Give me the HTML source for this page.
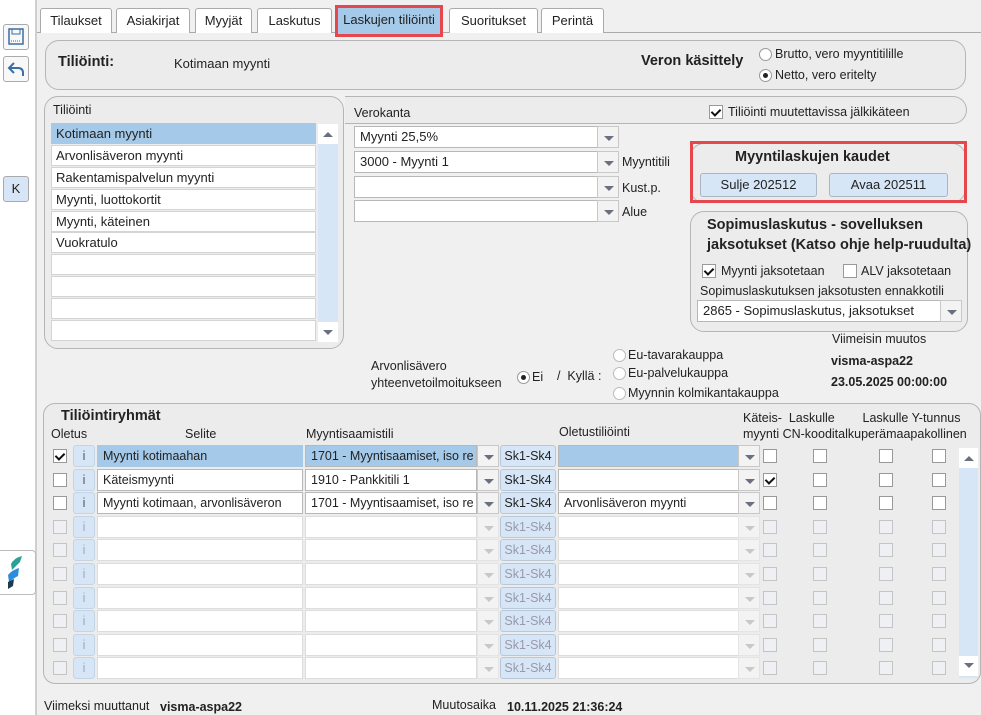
<!DOCTYPE html>
<html><head><meta charset="utf-8"><style>
*{box-sizing:border-box;margin:0;padding:0}
body{width:981px;height:715px;background:#f0f0f0;font-family:"Liberation Sans",Arial,sans-serif;font-size:12.5px;color:#222;position:relative;overflow:hidden}
.a{position:absolute}
.lbar{left:0;top:0;width:37px;height:715px;background:#fff;border-right:2px solid #cfcfcf}
.tbtn{width:26px;height:26px;border:1px solid #aaa;border-radius:3px;background:#f8f8f8}
.tab{top:8px;height:25px;border:1px solid #aaa;border-bottom:none;background:#fff;border-radius:3px 3px 0 0;text-align:center;line-height:23px;font-size:13px}
.panel{border:1px solid #b5b5b5;border-radius:14px;background:#ececec}
.box{background:#fff;border:1px solid #b8b8b8;height:22px;line-height:20px;padding-left:5px;white-space:nowrap;overflow:hidden}
.dd{background:#f3f3f3;border:1px solid #c8c8c8;width:22px;height:22px}
.dd:after{content:"";position:absolute;left:6px;top:9px;border-left:5px solid transparent;border-right:5px solid transparent;border-top:5px solid #6b7080}
.dd.dis:after{border-top-color:#c8c8c8}
.cb{width:14px;height:14px;border:1px solid #999;background:#fff}
.cb.dis{border-color:#c4c4c4;background:#eef0f4}
.chk:after{content:"";position:absolute;left:3px;top:1px;width:4px;height:7px;border:solid #111;border-width:0 2px 2px 0;transform:rotate(45deg)}
.ib{width:22px;height:22px;background:#d6e6f6;border:1px solid #c4d4e4;border-radius:3px;text-align:center;line-height:20px;color:#556}
.ib.dis{color:#9ab}
.sk{width:56px;height:22px;background:#d6e6f6;border:1px solid #b8c8d8;border-radius:3px;text-align:center;line-height:20px}
.sk.dis{color:#99a}
.li{left:51px;width:265px;height:21px;background:#fff;border:1px solid #d4d4d4;padding-left:4px;line-height:19px;font-size:13px}
.rad{width:13px;height:13px;border:1px solid #999;border-radius:50%;background:#fff}
.btn{height:24px;background:#d6e6f6;border:1px solid #a9b6c4;border-radius:3px;text-align:center;line-height:22px;font-size:13px}
b{font-weight:bold}
</style></head><body>
<div class="a lbar"></div>
<div class="a tbtn" style="left:3px;top:24px"><svg width="24" height="24"><rect x="5" y="4" width="14" height="15" fill="none" stroke="#3a6ea5" stroke-width="1.5"/><rect x="8" y="4" width="8" height="5" fill="none" stroke="#3a6ea5"/><line x1="7" y1="16" x2="17" y2="16" stroke="#3a6ea5" stroke-dasharray="1,1"/></svg></div>
<div class="a tbtn" style="left:3px;top:56px"><svg width="24" height="24"><path d="M10 6 L5 11 L10 16 M5 11 H14 Q19 11 19 16 V19" fill="none" stroke="#3a6ea5" stroke-width="2"/></svg></div>
<div class="a tbtn" style="left:3px;top:176px;text-align:center;line-height:24px;font-size:13px;background:#d6e6f6">K</div>
<div class="a" style="left:0;top:550px;width:36px;height:45px;border:1px solid #bbb;border-left:none;border-radius:0 4px 4px 0;background:#fff"><svg width="36" height="45"><path d="M11 13 Q14 7 22 5 L20 11 Q17 14 12 19 Z" fill="#2aa198"/><path d="M8 24 Q12 19 19 17 L18 25 Q14 27 9 31 Z" fill="#2b8de0"/><path d="M8 31 L14 28 L13 35 L8 38 Z" fill="#1d3b4a"/></svg></div>

<div class="a" style="left:37px;top:32px;width:944px;height:1px;background:#aaa"></div>
<div class="a tab" style="left:40px;width:72px">Tilaukset</div>
<div class="a tab" style="left:116px;width:74px">Asiakirjat</div>
<div class="a tab" style="left:195px;width:57px">Myyjät</div>
<div class="a tab" style="left:257px;width:75px">Laskutus</div>
<div class="a tab" style="left:335px;top:5px;width:108px;height:32px;background:#a5c9e9;border:3px solid #e5474d;border-radius:0;line-height:24px">Laskujen tiliöinti</div>
<div class="a tab" style="left:449px;width:89px">Suoritukset</div>
<div class="a tab" style="left:541px;width:63px">Perintä</div>

<div class="a panel" style="left:45px;top:40px;width:921px;height:50px"></div>
<div class="a" style="left:58px;top:54px;font-size:14.5px"><b>Tiliöinti:</b></div>
<div class="a" style="left:174px;top:56px;font-size:13px">Kotimaan myynti</div>
<div class="a" style="left:641px;top:53px;font-size:14.5px"><b>Veron käsittely</b></div>
<div class="a rad" style="left:759px;top:48px"></div><div class="a" style="left:775px;top:47px">Brutto, vero myyntitilille</div>
<div class="a rad" style="left:759px;top:69px"><div class="a" style="left:3px;top:3px;width:5px;height:5px;border-radius:50%;background:#222"></div></div><div class="a" style="left:775px;top:68px">Netto, vero eritelty</div>

<div class="a panel" style="left:44px;top:96px;width:300px;height:253px"></div>
<div class="a" style="left:53px;top:103px">Tiliöinti</div>
<div class="a li" style="top:123px;background:#a5c9e9;border-color:#a5c9e9">Kotimaan myynti</div>
<div class="a li" style="top:145px">Arvonlisäveron myynti</div>
<div class="a li" style="top:167px">Rakentamispalvelun myynti</div>
<div class="a li" style="top:189px">Myynti, luottokortit</div>
<div class="a li" style="top:211px">Myynti, käteinen</div>
<div class="a li" style="top:232px">Vuokratulo</div>
<div class="a li" style="top:254px"></div><div class="a li" style="top:276px"></div><div class="a li" style="top:298px"></div><div class="a li" style="top:320px"></div>
<div class="a" style="left:318px;top:124px;width:20px;height:218px;background:#d6e6f6"></div>
<div class="a" style="left:318px;top:124px;width:20px;height:20px;background:#fff"><div class="a" style="left:5px;top:8px;border-left:5px solid transparent;border-right:5px solid transparent;border-bottom:5px solid #6b7080"></div></div>
<div class="a" style="left:318px;top:322px;width:20px;height:20px;background:#fff"><div class="a" style="left:5px;top:8px;border-left:5px solid transparent;border-right:5px solid transparent;border-top:5px solid #6b7080"></div></div>

<div class="a" style="left:345px;top:96px;width:622px;height:28px;border:1px solid #b5b5b5;border-left:none;border-radius:0 14px 14px 0;background:#ececec"></div>
<div class="a" style="left:354px;top:106px">Verokanta</div>
<div class="a cb chk" style="left:709px;top:105px"></div><div class="a" style="left:728px;top:105px">Tiliöinti muutettavissa jälkikäteen</div>
<div class="a box" style="left:354px;top:126px;width:244px;font-size:13px">Myynti 25,5%</div><div class="a dd" style="left:597px;top:126px"></div>
<div class="a box" style="left:354px;top:151px;width:244px;font-size:13px">3000 - Myynti 1</div><div class="a dd" style="left:597px;top:151px"></div><div class="a" style="left:622px;top:155px">Myyntitili</div>
<div class="a box" style="left:354px;top:176px;width:244px"></div><div class="a dd" style="left:597px;top:176px"></div><div class="a" style="left:622px;top:181px">Kust.p.</div>
<div class="a box" style="left:354px;top:200px;width:244px"></div><div class="a dd" style="left:597px;top:200px"></div><div class="a" style="left:622px;top:205px">Alue</div>

<div class="a panel" style="left:690px;top:143px;width:276px;height:60px"></div>
<div class="a" style="left:690px;top:141px;width:277px;height:62px;border:3px solid #e5474d"></div>
<div class="a" style="left:735px;top:149px;font-size:14.5px"><b>Myyntilaskujen kaudet</b></div>
<div class="a btn" style="left:700px;top:173px;width:117px">Sulje 202512</div>
<div class="a btn" style="left:829px;top:173px;width:119px">Avaa 202511</div>

<div class="a panel" style="left:690px;top:211px;width:278px;height:121px"></div>
<div class="a" style="left:707px;top:215px;font-size:14.5px;line-height:20px;white-space:nowrap"><b>Sopimuslaskutus - sovelluksen<br>jaksotukset (Katso ohje help-ruudulta)</b></div>
<div class="a cb chk" style="left:702px;top:264px"></div><div class="a" style="left:721px;top:264px">Myynti jaksotetaan</div>
<div class="a cb" style="left:843px;top:264px"></div><div class="a" style="left:861px;top:264px">ALV jaksotetaan</div>
<div class="a" style="left:700px;top:284px">Sopimuslaskutuksen jaksotusten ennakkotili</div>
<div class="a box" style="left:697px;top:300px;width:244px;font-size:13px">2865 - Sopimuslaskutus, jaksotukset</div><div class="a dd" style="left:940px;top:300px"></div>
<div class="a" style="left:832px;top:332px">Viimeisin muutos</div>
<div class="a" style="left:831px;top:354px"><b>visma-aspa22</b></div>
<div class="a" style="left:831px;top:375px"><b>23.05.2025 00:00:00</b></div>

<div class="a" style="left:371px;top:358px;line-height:17px">Arvonlisävero<br>yhteenvetoilmoitukseen</div>
<div class="a rad" style="left:517px;top:371px"><div class="a" style="left:3px;top:3px;width:5px;height:5px;border-radius:50%;background:#222"></div></div><div class="a" style="left:532px;top:370px">Ei</div>
<div class="a" style="left:557px;top:369px">/&nbsp; Kyllä :</div>
<div class="a rad" style="left:613px;top:349px;border-color:#bbb"></div><div class="a" style="left:628px;top:348px">Eu-tavarakauppa</div>
<div class="a rad" style="left:613px;top:367px;border-color:#bbb"></div><div class="a" style="left:628px;top:366px">Eu-palvelukauppa</div>
<div class="a rad" style="left:613px;top:387px;border-color:#bbb"></div><div class="a" style="left:628px;top:386px">Myynnin kolmikantakauppa</div>

<div class="a panel" style="left:43px;top:403px;width:938px;height:281px;border-radius:12px"></div>
<div class="a" style="left:61px;top:408px;font-size:14.5px"><b>Tiliöintiryhmät</b></div>
<div class="a" style="left:51px;top:427px">Oletus</div>
<div class="a" style="left:185px;top:427px">Selite</div>
<div class="a" style="left:306px;top:427px">Myyntisaamistili</div>
<div class="a" style="left:559px;top:425px">Oletustiliöinti</div>
<div class="a" style="left:743px;top:410px;line-height:16px;white-space:nowrap">Käteis-&nbsp; Laskulle&nbsp;&nbsp;&nbsp;&nbsp;&nbsp;&nbsp;&nbsp; Laskulle Y-tunnus<br>myynti CN-kooditalkuperämaapakollinen</div>

<div class="a cb chk" style="left:53px;top:449px"></div><div class="a ib" style="left:73px;top:445px">i</div><div class="a box" style="left:97px;top:445px;width:206px;background:#a5c9e9;border-color:#a5c9e9">Myynti kotimaahan</div><div class="a box" style="left:305px;top:445px;width:172px;background:#a5c9e9">1701 - Myyntisaamiset, iso re</div><div class="a dd" style="left:477px;top:445px"></div><div class="a sk" style="left:500px;top:445px">Sk1-Sk4</div><div class="a box" style="left:558px;top:445px;width:181px;background:#a5c9e9"></div><div class="a dd" style="left:738px;top:445px"></div>
<div class="a cb" style="left:53px;top:473px"></div><div class="a ib" style="left:73px;top:469px">i</div><div class="a box" style="left:97px;top:469px;width:206px">Käteismyynti</div><div class="a box" style="left:305px;top:469px;width:172px">1910 - Pankkitili 1</div><div class="a dd" style="left:477px;top:469px"></div><div class="a sk" style="left:500px;top:469px">Sk1-Sk4</div><div class="a box" style="left:558px;top:469px;width:181px"></div><div class="a dd" style="left:738px;top:469px"></div>
<div class="a cb" style="left:53px;top:496px"></div><div class="a ib" style="left:73px;top:492px">i</div><div class="a box" style="left:97px;top:492px;width:206px">Myynti kotimaan, arvonlisäveron</div><div class="a box" style="left:305px;top:492px;width:172px">1701 - Myyntisaamiset, iso re</div><div class="a dd" style="left:477px;top:492px"></div><div class="a sk" style="left:500px;top:492px">Sk1-Sk4</div><div class="a box" style="left:558px;top:492px;width:181px">Arvonlisäveron myynti</div><div class="a dd" style="left:738px;top:492px"></div>

<div class="a cb dis" style="left:53px;top:520px"></div><div class="a ib dis" style="left:73px;top:516px">i</div><div class="a box" style="left:97px;top:516px;width:206px;border-color:#ddd"></div><div class="a box" style="left:305px;top:516px;width:172px;border-color:#ddd"></div><div class="a dd dis" style="left:477px;top:516px;border-color:#e4e4e4"></div><div class="a sk dis" style="left:500px;top:516px">Sk1-Sk4</div><div class="a box" style="left:558px;top:516px;width:181px;border-color:#ddd"></div><div class="a dd dis" style="left:738px;top:516px;border-color:#e4e4e4"></div>
<div class="a cb dis" style="left:53px;top:543px"></div><div class="a ib dis" style="left:73px;top:539px">i</div><div class="a box" style="left:97px;top:539px;width:206px;border-color:#ddd"></div><div class="a box" style="left:305px;top:539px;width:172px;border-color:#ddd"></div><div class="a dd dis" style="left:477px;top:539px;border-color:#e4e4e4"></div><div class="a sk dis" style="left:500px;top:539px">Sk1-Sk4</div><div class="a box" style="left:558px;top:539px;width:181px;border-color:#ddd"></div><div class="a dd dis" style="left:738px;top:539px;border-color:#e4e4e4"></div>
<div class="a cb dis" style="left:53px;top:567px"></div><div class="a ib dis" style="left:73px;top:563px">i</div><div class="a box" style="left:97px;top:563px;width:206px;border-color:#ddd"></div><div class="a box" style="left:305px;top:563px;width:172px;border-color:#ddd"></div><div class="a dd dis" style="left:477px;top:563px;border-color:#e4e4e4"></div><div class="a sk dis" style="left:500px;top:563px">Sk1-Sk4</div><div class="a box" style="left:558px;top:563px;width:181px;border-color:#ddd"></div><div class="a dd dis" style="left:738px;top:563px;border-color:#e4e4e4"></div>
<div class="a cb dis" style="left:53px;top:591px"></div><div class="a ib dis" style="left:73px;top:587px">i</div><div class="a box" style="left:97px;top:587px;width:206px;border-color:#ddd"></div><div class="a box" style="left:305px;top:587px;width:172px;border-color:#ddd"></div><div class="a dd dis" style="left:477px;top:587px;border-color:#e4e4e4"></div><div class="a sk dis" style="left:500px;top:587px">Sk1-Sk4</div><div class="a box" style="left:558px;top:587px;width:181px;border-color:#ddd"></div><div class="a dd dis" style="left:738px;top:587px;border-color:#e4e4e4"></div>
<div class="a cb dis" style="left:53px;top:614px"></div><div class="a ib dis" style="left:73px;top:610px">i</div><div class="a box" style="left:97px;top:610px;width:206px;border-color:#ddd"></div><div class="a box" style="left:305px;top:610px;width:172px;border-color:#ddd"></div><div class="a dd dis" style="left:477px;top:610px;border-color:#e4e4e4"></div><div class="a sk dis" style="left:500px;top:610px">Sk1-Sk4</div><div class="a box" style="left:558px;top:610px;width:181px;border-color:#ddd"></div><div class="a dd dis" style="left:738px;top:610px;border-color:#e4e4e4"></div>
<div class="a cb dis" style="left:53px;top:638px"></div><div class="a ib dis" style="left:73px;top:634px">i</div><div class="a box" style="left:97px;top:634px;width:206px;border-color:#ddd"></div><div class="a box" style="left:305px;top:634px;width:172px;border-color:#ddd"></div><div class="a dd dis" style="left:477px;top:634px;border-color:#e4e4e4"></div><div class="a sk dis" style="left:500px;top:634px">Sk1-Sk4</div><div class="a box" style="left:558px;top:634px;width:181px;border-color:#ddd"></div><div class="a dd dis" style="left:738px;top:634px;border-color:#e4e4e4"></div>
<div class="a cb dis" style="left:53px;top:661px"></div><div class="a ib dis" style="left:73px;top:657px">i</div><div class="a box" style="left:97px;top:657px;width:206px;border-color:#ddd"></div><div class="a box" style="left:305px;top:657px;width:172px;border-color:#ddd"></div><div class="a dd dis" style="left:477px;top:657px;border-color:#e4e4e4"></div><div class="a sk dis" style="left:500px;top:657px">Sk1-Sk4</div><div class="a box" style="left:558px;top:657px;width:181px;border-color:#ddd"></div><div class="a dd dis" style="left:738px;top:657px;border-color:#e4e4e4"></div>

<div class="a cb" style="left:763px;top:449px"></div><div class="a cb" style="left:813px;top:449px"></div><div class="a cb" style="left:879px;top:449px"></div><div class="a cb" style="left:932px;top:449px"></div>
<div class="a cb chk" style="left:763px;top:473px"></div><div class="a cb" style="left:813px;top:473px"></div><div class="a cb" style="left:879px;top:473px"></div><div class="a cb" style="left:932px;top:473px"></div>
<div class="a cb" style="left:763px;top:496px"></div><div class="a cb" style="left:813px;top:496px"></div><div class="a cb" style="left:879px;top:496px"></div><div class="a cb" style="left:932px;top:496px"></div>
<div class="a cb dis" style="left:763px;top:520px"></div><div class="a cb dis" style="left:813px;top:520px"></div><div class="a cb dis" style="left:879px;top:520px"></div><div class="a cb dis" style="left:932px;top:520px"></div>
<div class="a cb dis" style="left:763px;top:543px"></div><div class="a cb dis" style="left:813px;top:543px"></div><div class="a cb dis" style="left:879px;top:543px"></div><div class="a cb dis" style="left:932px;top:543px"></div>
<div class="a cb dis" style="left:763px;top:567px"></div><div class="a cb dis" style="left:813px;top:567px"></div><div class="a cb dis" style="left:879px;top:567px"></div><div class="a cb dis" style="left:932px;top:567px"></div>
<div class="a cb dis" style="left:763px;top:591px"></div><div class="a cb dis" style="left:813px;top:591px"></div><div class="a cb dis" style="left:879px;top:591px"></div><div class="a cb dis" style="left:932px;top:591px"></div>
<div class="a cb dis" style="left:763px;top:614px"></div><div class="a cb dis" style="left:813px;top:614px"></div><div class="a cb dis" style="left:879px;top:614px"></div><div class="a cb dis" style="left:932px;top:614px"></div>
<div class="a cb dis" style="left:763px;top:638px"></div><div class="a cb dis" style="left:813px;top:638px"></div><div class="a cb dis" style="left:879px;top:638px"></div><div class="a cb dis" style="left:932px;top:638px"></div>
<div class="a cb dis" style="left:763px;top:661px"></div><div class="a cb dis" style="left:813px;top:661px"></div><div class="a cb dis" style="left:879px;top:661px"></div><div class="a cb dis" style="left:932px;top:661px"></div>
<div class="a" style="left:959px;top:448px;width:19px;height:230px;background:#d6e6f6"></div>
<div class="a" style="left:959px;top:448px;width:19px;height:20px;background:#fff"><div class="a" style="left:5px;top:8px;border-left:5px solid transparent;border-right:5px solid transparent;border-bottom:5px solid #6b7080"></div></div>
<div class="a" style="left:959px;top:656px;width:19px;height:20px;background:#fff"><div class="a" style="left:5px;top:7px;border-left:5px solid transparent;border-right:5px solid transparent;border-top:5px solid #6b7080"></div></div>

<div class="a" style="left:44px;top:699px">Viimeksi muuttanut</div>
<div class="a" style="left:160px;top:700px"><b>visma-aspa22</b></div>
<div class="a" style="left:432px;top:698px">Muutosaika</div>
<div class="a" style="left:507px;top:700px"><b>10.11.2025 21:36:24</b></div>
</body></html>
